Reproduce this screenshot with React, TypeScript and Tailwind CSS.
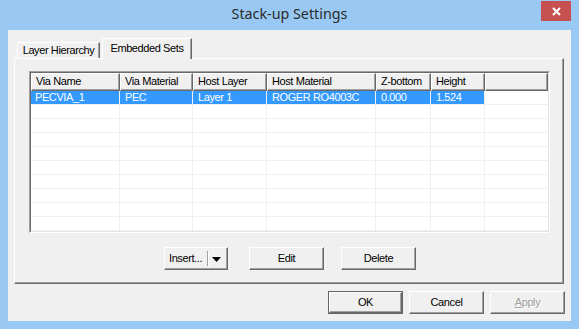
import React from "react";

const cols = [
  { name: "Via Name", w: "w-[89px]" },
  { name: "Via Material", w: "w-[73px]" },
  { name: "Host Layer", w: "w-[74px]" },
  { name: "Host Material", w: "w-[109px]" },
  { name: "Z-bottom", w: "w-[55px]" },
  { name: "Height", w: "w-[54px]" },
];

const row1 = ["PECVIA_1", "PEC", "Layer 1", "ROGER RO4003C", "0.000", "1.524"];

function RaisedButton({
  children,
  className = "",
}: {
  children: React.ReactNode;
  className?: string;
}) {
  return (
    <div
      className={
        "h-[23px] bg-[#f0f0f0] border border-t-white border-l-white border-r-[#696969] border-b-[#696969] shadow-[inset_-1px_-1px_0_#a0a0a0] flex items-center justify-center leading-[13px] " +
        className
      }
    >
      {children}
    </div>
  );
}

export default function App() {
  return (
    <div className="w-[579px] h-[329px] bg-[#99c9f2] flex flex-col font-['Liberation_Sans',Arial,sans-serif] text-[11px] tracking-[-0.4px] text-black overflow-hidden">
      {/* Title bar */}
      <div className="h-[30px] relative flex items-center justify-center shrink-0">
        <span className="font-['Noto_Sans',sans-serif] text-[14.3px] tracking-normal text-[#2b2b2b] leading-none -mt-[1px]">
          Stack-up Settings
        </span>
        <div className="absolute right-[8px] top-[1px] w-[30px] h-[20px] bg-[#c75050] flex items-center justify-center">
          <svg width="9" height="9" viewBox="0 0 9 9">
            <path d="M1 1 L8 8 M8 1 L1 8" stroke="#ffffff" strokeWidth="2" />
          </svg>
        </div>
      </div>

      {/* Client area */}
      <div className="mx-[8px] h-[291px] bg-[#f0f0f0] flex flex-col">
        {/* Tab strip */}
        <div className="h-[28px] flex items-end shrink-0">
          <div className="ml-[9px] w-[83px] h-[16px] border-l border-t border-white border-r border-r-[#696969] shadow-[inset_-1px_0_0_#a0a0a0] flex justify-center pt-[1px] leading-[13px] rounded-tl-[2px]">
            Layer Hierarchy
          </div>
          <div className="ml-[2px] w-[90px] h-[21px] -mb-[1px] relative z-10 bg-[#f0f0f0] border-l border-t border-white border-r border-r-[#696969] shadow-[inset_-1px_0_0_#a0a0a0] flex justify-center pt-[3px] leading-[13px] rounded-tl-[2px]">
            Embedded Sets
          </div>
        </div>

        {/* Tab panel */}
        <div className="ml-[6px] w-[550px] h-[226px] shrink-0 border border-t-white border-l-white border-r-[#696969] border-b-[#696969] shadow-[inset_-1px_-1px_0_#a0a0a0] pl-[14px] pt-[12px] flex flex-col">
          {/* List view */}
          <div className="w-[521px] h-[162px] border border-t-[#a0a0a0] border-l-[#a0a0a0] border-r-white border-b-white">
            <div className="w-full h-full border border-t-[#696969] border-l-[#696969] border-r-[#e3e3e3] border-b-[#e3e3e3] bg-white overflow-hidden flex flex-col">
              {/* Header */}
              <div className="h-[18px] flex shrink-0">
                {cols.map((c) => (
                  <div
                    key={c.name}
                    className={
                      c.w +
                      " h-[18px] bg-[#f0f0f0] border border-t-white border-l-white border-r-[#696969] border-b-[#696969] shadow-[inset_-1px_-1px_0_#a0a0a0] pl-[4px] leading-[15px] whitespace-nowrap overflow-hidden shrink-0"
                    }
                  >
                    {c.name}
                  </div>
                ))}
                <div className="flex-1 h-[18px] bg-[#f0f0f0] border border-t-white border-l-white border-r-[#696969] border-b-[#696969] shadow-[inset_-1px_-1px_0_#a0a0a0]" />
              </div>
              {/* Body */}
              {Array.from({ length: 10 }).map((_, r) => (
                <div key={r} className="h-[14px] flex shrink-0">
                  {cols.map((c, i) => (
                    <div
                      key={c.name}
                      className={
                        c.w +
                        " h-[14px] border-r border-b border-[#f0f0f0] shrink-0 whitespace-nowrap overflow-hidden leading-[13px] " +
                        (i === 0 ? "pl-[4px] " : "pl-[5px] ") +
                        (r === 0 ? "bg-[#3399ff] text-white" : "")
                      }
                    >
                      {r === 0 ? row1[i] : ""}
                    </div>
                  ))}
                  <div className="flex-1 h-[14px] border-b border-[#f0f0f0]" />
                </div>
              ))}
            </div>
          </div>

          {/* Insert / Edit / Delete */}
          <div className="mt-[14px] flex">
            <RaisedButton className="ml-[135px] w-[64px] justify-start pl-[4px]">
              <span>Insert...</span>
              <span className="ml-[5px] w-[1px] h-[15px] bg-[#a0a0a0]" />
              <span className="w-[1px] h-[15px] bg-white" />
              <svg width="9" height="5" viewBox="0 0 9 5" className="ml-[3px] mt-[1px]">
                <path d="M0 0 H9 L4.5 5 Z" fill="#000000" />
              </svg>
            </RaisedButton>
            <RaisedButton className="ml-[21px] w-[75px]">Edit</RaisedButton>
            <RaisedButton className="ml-[17px] w-[75px]">Delete</RaisedButton>
          </div>
        </div>

        {/* Dialog buttons */}
        <div className="mt-[7px] flex justify-end pr-[6px] gap-[6px]">
          <div className="w-[75px] h-[23px] border border-[#646464]">
            <div className="w-full h-full bg-[#f0f0f0] border border-t-white border-l-white border-r-[#696969] border-b-[#696969] shadow-[inset_-1px_-1px_0_#a0a0a0] flex items-center justify-center leading-[13px]">
              OK
            </div>
          </div>
          <RaisedButton className="w-[75px]">Cancel</RaisedButton>
          <RaisedButton className="w-[75px] text-[#a0a0a0] [text-shadow:1px_1px_0_#ffffff]">
            <span>
              <span className="underline">A</span>pply
            </span>
          </RaisedButton>
        </div>
      </div>
    </div>
  );
}
